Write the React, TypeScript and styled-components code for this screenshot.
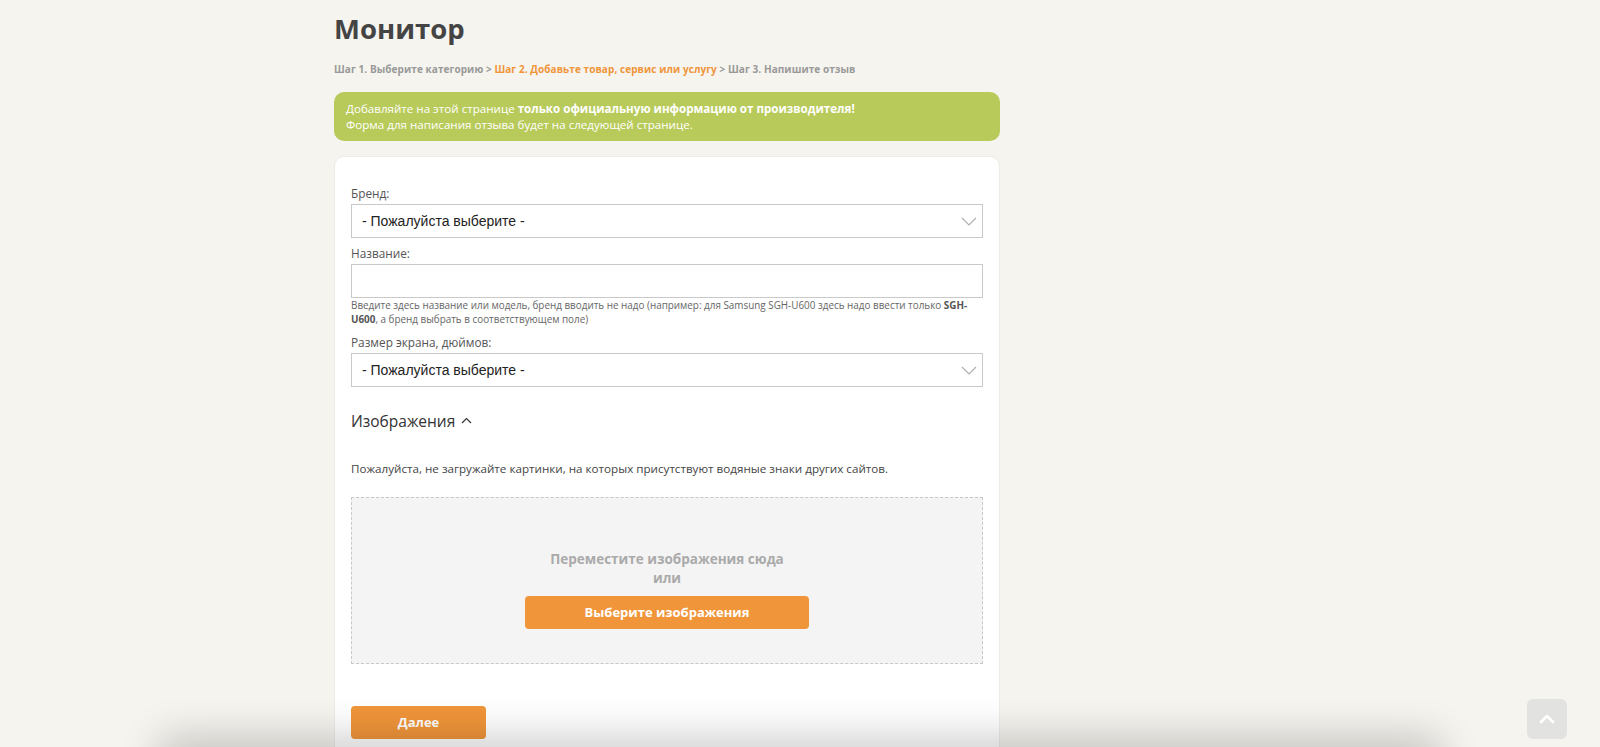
import styled, { createGlobalStyle } from "styled-components";

const GlobalStyle = createGlobalStyle`
  body {
    margin: 0;
    background: #f5f4ef;
    font-family: "Open Sans", "Liberation Sans", sans-serif;
    color: #444;
  }
`;

const Page = styled.div`
  width: 932px;
  margin: 0 auto;
  padding-top: 11px;
`;

const Main = styled.main`
  width: 666px;
`;

const Title = styled.h1`
  margin: 0;
  font-size: 27.5px;
  line-height: 36px;
  font-weight: 700;
  color: #444;
`;

const Breadcrumbs = styled.div`
  margin-top: 15px;
  font-size: 10px;
  letter-spacing: 0.08px;
  line-height: 14px;
  font-weight: 700;
  color: #999;
`;

const Current = styled.span`
  color: #f0953a;
`;

const Alert = styled.div`
  margin-top: 16px;
  background: #b8ca5a;
  color: #fff;
  border-radius: 10px;
  padding: 9px 12px 8px;
  font-size: 11.6px;
  line-height: 16px;
  b {
    font-weight: 700;
  }
`;

const Card = styled.section`
  margin-top: 15px;
  background: #fff;
  border: 1px solid #eeece7;
  border-radius: 10px;
  padding: 27px 16px 40px;
`;

const Label = styled.label<{ $gap?: number }>`
  display: block;
  margin-top: ${({ $gap }) => $gap ?? 0}px;
  margin-bottom: 2px;
  font-size: 11.8px;
  line-height: 18px;
  color: #555;
`;

const FieldBox = styled.div`
  position: relative;
  height: 34px;
  box-sizing: border-box;
  border: 1px solid #c9c9c9;
  background: #fff;
  display: flex;
  align-items: center;
  padding: 0 10px;
  font-family: "Liberation Sans", Arial, sans-serif;
  font-size: 14px;
  color: #222;
`;

const Chevron = styled.svg`
  position: absolute;
  right: 5px;
  top: 12px;
`;

const Help = styled.p`
  margin: 0;
  font-size: 9.9px;
  line-height: 14.4px;
  color: #666;
  b {
    font-weight: 700;
    color: #555;
  }
`;

const SectionHead = styled.div`
  margin-top: 23px;
  display: flex;
  align-items: center;
  gap: 6px;
  font-size: 15.5px;
  line-height: 22px;
  color: #333;
`;

const Notice = styled.p`
  margin: 28px 0 0;
  font-size: 11.65px;
  line-height: 18px;
  color: #444;
`;

const DropZone = styled.div`
  margin-top: 19px;
  height: 167px;
  box-sizing: border-box;
  border: 1px dashed #c8c8c8;
  background: #f4f4f4;
  padding-top: 52px;
  display: flex;
  flex-direction: column;
  align-items: center;
`;

const DropText = styled.div`
  font-size: 13.5px;
  line-height: 19px;
  font-weight: 700;
  color: #aaa;
  text-align: center;
`;

const OrangeButton = styled.button<{ $width: number }>`
  width: ${({ $width }) => $width}px;
  height: 33px;
  border: none;
  border-radius: 4px;
  background: #f0953a;
  color: #fff;
  font-family: "Open Sans", sans-serif;
  font-size: 13px;
  font-weight: 700;
  cursor: pointer;
`;

const PickButton = styled(OrangeButton)`
  margin-top: 8px;
`;

const NextButton = styled(OrangeButton)`
  margin-top: 42px;
  display: block;
`;

const BottomShade = styled.div`
  position: fixed;
  left: 170px;
  right: 170px;
  bottom: -40px;
  height: 40px;
  box-shadow: 0 0 40px 10px rgba(0, 0, 0, 0.2);
  pointer-events: none;
`;

const ToTop = styled.button`
  position: fixed;
  right: 33px;
  bottom: 8px;
  width: 40px;
  height: 40px;
  border: none;
  border-radius: 6px;
  background: #e2e2e0;
  display: flex;
  align-items: center;
  justify-content: center;
  padding: 0;
`;

const SelectChevron = () => (
  <Chevron width="16" height="9" viewBox="0 0 16 9">
    <path d="M1 1l7 7 7-7" fill="none" stroke="#b0b0b0" strokeWidth="1.2" />
  </Chevron>
);

const Select = ({ text }: { text: string }) => (
  <FieldBox>
    {text}
    <SelectChevron />
  </FieldBox>
);

export default function App() {
  return (
    <>
      <GlobalStyle />
      <Page>
        <Main>
          <Title>Монитор</Title>
          <Breadcrumbs>
            Шаг 1. Выберите категорию &gt;{" "}
            <Current>Шаг 2. Добавьте товар, сервис или услугу</Current> &gt; Шаг
            3. Напишите отзыв
          </Breadcrumbs>
          <Alert>
            Добавляйте на этой странице{" "}
            <b>только официальную информацию от производителя!</b>
            <br />
            Форма для написания отзыва будет на следующей странице.
          </Alert>
          <Card>
            <Label>Бренд:</Label>
            <Select text="- Пожалуйста выберите -" />
            <Label $gap={6}>Название:</Label>
            <FieldBox />
            <Help>
              Введите здесь название или модель, бренд вводить не надо
              (например: для Samsung SGH-U600 здесь надо ввести только{" "}
              <b>SGH-U600</b>, а бренд выбрать в соответствующем поле)
            </Help>
            <Label $gap={6}>Размер экрана, дюймов:</Label>
            <Select text="- Пожалуйста выберите -" />
            <SectionHead>
              Изображения
              <svg width="11" height="7" viewBox="0 0 11 7">
                <path d="M1 6l4.5-4.5L10 6" fill="none" stroke="#333" strokeWidth="1.2" />
              </svg>
            </SectionHead>
            <Notice>
              Пожалуйста, не загружайте картинки, на которых присутствуют
              водяные знаки других сайтов.
            </Notice>
            <DropZone>
              <DropText>
                Переместите изображения сюда
                <br />
                или
              </DropText>
              <PickButton $width={284}>Выберите изображения</PickButton>
            </DropZone>
            <NextButton $width={135}>Далее</NextButton>
          </Card>
        </Main>
      </Page>
      <BottomShade />
      <ToTop aria-label="Наверх">
        <svg width="16" height="10" viewBox="0 0 16 10">
          <path d="M2 8l6-6 6 6" fill="none" stroke="#fff" strokeWidth="2.6" strokeLinecap="round" strokeLinejoin="round" />
        </svg>
      </ToTop>
    </>
  );
}
